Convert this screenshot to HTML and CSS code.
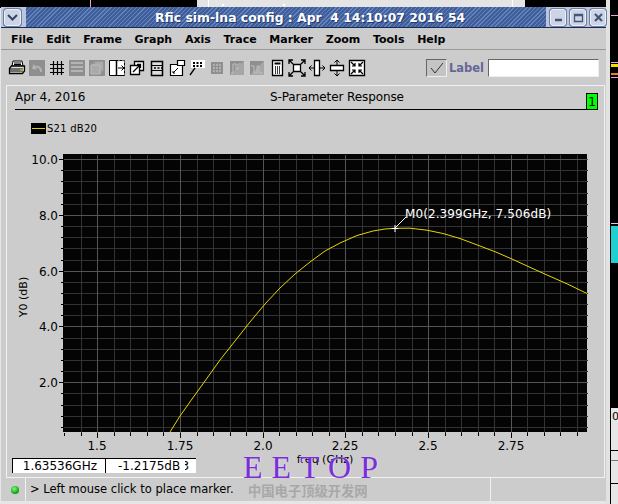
FILE: index.html
```
<!DOCTYPE html>
<html lang="en">
<head>
<meta charset="utf-8">
<title>Rfic sim-lna config</title>
<link rel="stylesheet" href="styles.css">
</head>
<body>
<div class="desk-top"><i class="dt a"></i><i class="dt b"></i><i class="dt c"></i><i class="dt d"></i><i class="dt e"></i><i class="dt f"></i></div>
<div class="desk-right">
  <i class="streak s1"></i><i class="streak s2"></i><i class="streak s3"></i><i class="streak s4"></i><i class="streak s5"></i>
  <i class="streak s6"></i><i class="cyan"></i>
  <div class="cell-block"><span class="cell-o">0</span></div>
</div>
<div class="window">
  <div class="titlebar">
    <button class="wbtn menu-btn"><svg width="11" height="7" viewBox="0 0 11 7"><path d="M1 1l4.500 4.500L10 1" fill="none" stroke="#334466" stroke-width="2"/></svg></button>
    <div class="title-stripes"><span class="title-text">Rfic sim-lna config : Apr&nbsp;&nbsp;4 14:10:07 2016 54</span></div>
    <div class="wbtns">
      <button class="wbtn small"><svg width="11" height="11" viewBox="0 0 11 11"><path d="M2 8h7" stroke="#445577" stroke-width="2.500"/></svg></button>
      <button class="wbtn small"><svg width="11" height="11" viewBox="0 0 11 11"><path d="M1.500 2.500h8v7h-8z M1.500 3.500h8" fill="none" stroke="#445577" stroke-width="1.300"/></svg></button>
      <button class="wbtn small"><svg width="11" height="11" viewBox="0 0 11 11"><path d="M2 2l7 7M9 2l-7 7" stroke="#445577" stroke-width="2.200"/></svg></button>
    </div>
  </div>
  <nav class="menubar">
    <span>File</span><span>Edit</span><span>Frame</span><span>Graph</span><span>Axis</span><span>Trace</span><span>Marker</span><span>Zoom</span><span>Tools</span><span>Help</span>
  </nav>
  <div class="toolbar">
    <div class="tools">
      <svg class="tool" viewBox="0 0 20 20"><path d="M6 3h9l1 5H5z" fill="#fff" stroke="#000"/><path d="M7 5h7M7 6.500h7" stroke="#000"/><path d="M2.500 10.500l2-2.500h13v5l-2 2.500h-13z" fill="#ddd" stroke="#000" stroke-width="1.300"/><path d="M3 11h13M3 13h13" stroke="#000"/><path d="M13 12h3" stroke="#dd0"/></svg>
      <svg class="tool" viewBox="0 0 20 20"><path d="M2 2h16v16H2z" fill="#8f8f8f"/><path d="M15 14c0-5-3-7-7-6L6.500 6 5 11l5 .500-1.500-2c3-.500 4.500 1 4.500 4.500z" fill="#b4b4b4"/></svg>
      <svg class="tool" viewBox="0 0 20 20"><path d="M6.500 3v14M10.500 3v14M14.500 3v14M3 6.500h14M3 10.500h14M3 14.500h14" stroke="#000" stroke-width="1.200"/></svg>
      <svg class="tool" viewBox="0 0 20 20"><path d="M2 2h16v16H2z" fill="#8f8f8f"/><path d="M4 5h12M4 9h12M4 13h12" stroke="#b4b4b4" stroke-width="2"/></svg>
      <svg class="tool" viewBox="0 0 20 20"><path d="M2 2h16v16H2z" fill="#8f8f8f"/><path d="M7 4h9v9M5 6h9v9H5z" fill="#b4b4b4" stroke="#a0a0a0"/><path d="M4 7h9v9H4z" fill="#aaa" stroke="#bbb"/></svg>
      <svg class="tool" viewBox="0 0 20 20"><path d="M2.500 2.500h15v15h-15z" fill="#fff" stroke="#000"/><path d="M9.500 2v16" stroke="#000" stroke-width="1.500"/><path d="M11 3h7M18 3v14" stroke="#ccc" stroke-dasharray="2 2"/><path d="M11 10h6M14.500 7.500L17 10l-2.500 2.500" fill="none" stroke="#000"/></svg>
      <svg class="tool" viewBox="0 0 20 20"><path d="M7.500 3.500h9v9h-9z" fill="#fff" stroke="#000" stroke-width="1.300"/><path d="M3.500 7.500h9v9h-9z" fill="#fff" stroke="#000" stroke-width="1.300"/><path d="M6 14l7-7M10 6.500h3.500V10" fill="none" stroke="#000" stroke-width="1.300"/></svg>
      <svg class="tool" viewBox="0 0 20 20"><path d="M4.500 3.500h11v14h-11z" fill="#ddd" stroke="#000" stroke-width="1.500"/><path d="M4 7.500h12M4 12.500h12" stroke="#000"/><path d="M7 10h2M10.500 10h2M14 10h2" stroke="#000" stroke-width="1.500"/></svg>
      <svg class="tool" viewBox="0 0 20 20"><path d="M3.500 6.500h12v11h-12z" fill="#fff" stroke="#000" stroke-width="1.200"/><path d="M10.500 2.500h7v5h-7z" fill="#fff" stroke="#000" stroke-width="1.200"/><path d="M6 15l5-5M8 15h-2v-2" fill="none" stroke="#000"/></svg>
      <svg class="tool" viewBox="0 0 20 20"><path d="M4 2h14v8H4z" fill="#fff"/><path d="M6 4h2v2H6zM9.500 4h2v2h-2zM13 4h2v2h-2zM6 7h2v2H6zM9.500 7h2v2h-2zM13 7h2v2h-2z" fill="#000"/><path d="M8 10l-5 7" stroke="#000" stroke-width="1.300"/></svg>
      <svg class="tool" viewBox="0 0 20 20"><path d="M4 4h12v12H4z" fill="#8f8f8f"/><path d="M6 6h2v2H6zM9 6h2v2H9zM12 6h2v2h-2zM6 9h2v2H6zM9 9h2v2H9zM12 9h2v2h-2zM6 12h2v2H6zM9 12h2v2H9zM12 12h2v2h-2z" fill="#b0b0b0"/></svg>
      <svg class="tool" viewBox="0 0 20 20"><path d="M3 3h14v14H3z" fill="#8f8f8f"/><path d="M3 17L17 3v14z" fill="#a6a6a6"/><path d="M4 15h2V6h3v5h2V6h3" fill="none" stroke="#c0c0c0"/></svg>
      <svg class="tool" viewBox="0 0 20 20"><path d="M3 3h14v14H3z" fill="#8f8f8f"/><path d="M3 17L17 3v14z" fill="#a6a6a6"/><path d="M4 8h3v7h3V8h2v7h4" fill="none" stroke="#c0c0c0"/></svg>
      <svg class="tool" viewBox="0 0 20 20"><path d="M5.500 2.500h10v15h-10z" fill="#fff" stroke="#000" stroke-width="1.300"/><path d="M7.500 4.500h6v2h-6z" fill="#000"/><path d="M8 9h1M10 9h1M12 9h1M8 11h1M10 11h1M12 11h1M8 13h1M10 13h1M12 13h1M8 15h1M10 15h1M12 15h1" stroke="#000" stroke-width="1.300"/></svg>
      <svg class="tool" viewBox="0 0 20 20"><path d="M6.500 6.500h7v7h-7z" fill="#fff" stroke="#000" stroke-width="1.300"/><path d="M6 6L2 2M14 6l4-4M6 14l-4 4M14 14l4 4M2 6V2h4M14 2h4v4M2 14v4h4M14 18h4v-4" fill="none" stroke="#000" stroke-width="1.300"/></svg>
      <svg class="tool" viewBox="0 0 20 20"><path d="M7.500 2.500h5v15h-5z" fill="#fff" stroke="#000" stroke-width="1.300"/><path d="M7 10H2M13 10h5M4.500 7.500L2 10l2.500 2.500M15.500 7.500L18 10l-2.500 2.500" fill="none" stroke="#000"/></svg>
      <svg class="tool" viewBox="0 0 20 20"><path d="M3.500 7.500h13v5h-13z" fill="#fff" stroke="#000" stroke-width="1.300"/><path d="M10 7V2M10 13v5M7.500 4.500L10 2l2.500 2.500M7.500 15.500L10 18l2.500-2.500" fill="none" stroke="#000"/></svg>
      <svg class="tool" viewBox="0 0 20 20"><path d="M2.500 2.500h15v15h-15z" fill="#fff" stroke="#000" stroke-width="1.300"/><path d="M4 4l4 4M8 5v3H5M16 4l-4 4M12 5v3h3M4 16l4-4M8 15v-3H5M16 16l-4-4M12 15v-3h3" fill="none" stroke="#000" stroke-width="1.200"/></svg>
    </div>
    <div class="label-box">
      <span class="check"><svg width="19" height="15" viewBox="0 0 19 15"><path d="M4 7l4 5 8-10" fill="none" stroke="#333"/></svg></span>
      <span class="label-text">Label</span>
      <span class="label-input"></span>
    </div>
  </div>
  <section class="panel">
    <header class="panel-head">
      <span class="date">Apr 4, 2016</span>
      <span class="chart-title">S-Parameter Response</span>
      <span class="badge">1</span>
    </header>
    <div class="legend"><span class="swatch"><i></i></span><span class="legend-name">S21 dB20</span></div>
    <svg class="chart" viewBox="7 137 597 339" width="597" height="339">
      <rect x="63" y="154" width="524" height="278" fill="#040404"/>
      <g transform="translate(.5 .5)" fill="none" shape-rendering="crispEdges">
        <path stroke="#333" d="M81 154v278M114 154v278M130 154v278M147 154v278M163 154v278M197 154v278M213 154v278M230 154v278M246 154v278M279 154v278M296 154v278M312 154v278M329 154v278M362 154v278M378 154v278M395 154v278M412 154v278M445 154v278M461 154v278M478 154v278M494 154v278M527 154v278M544 154v278M560 154v278M577 154v278"/>
        <path stroke="#333" d="M63 170h524M63 181h524M63 193h524M63 204h524M63 226h524M63 237h524M63 248h524M63 260h524M63 282h524M63 293h524M63 304h524M63 315h524M63 338h524M63 349h524M63 360h524M63 371h524M63 393h524M63 405h524M63 416h524M63 427h524"/>
        <path stroke="#555" d="M97 154v278M180 154v278M263 154v278M345 154v278M428 154v278M511 154v278M63 159h524M63 215h524M63 271h524M63 326h524M63 382h524"/>
        <path stroke="#000" d="M58 159h5M60 170h3M60 181h3M60 193h3M60 204h3M58 215h5M60 226h3M60 237h3M60 248h3M60 260h3M58 271h5M60 282h3M60 293h3M60 304h3M60 315h3M58 326h5M60 338h3M60 349h3M60 360h3M60 371h3M58 382h5M60 393h3M60 405h3M60 416h3M60 427h3"/>
        <path stroke="#000" d="M64 432v3M81 432v3M97 432v5M114 432v3M130 432v3M147 432v3M163 432v3M180 432v5M197 432v3M213 432v3M230 432v3M246 432v3M263 432v5M279 432v3M296 432v3M312 432v3M329 432v3M345 432v5M362 432v3M378 432v3M395 432v3M412 432v3M428 432v5M445 432v3M461 432v3M478 432v3M494 432v3M511 432v5M527 432v3M544 432v3M560 432v3M577 432v3"/>
      </g>
      <path class="curve" d="M170 432L180 416L192 399L205 381L220 360L235 341L250 322L265 304L280 288L295 274L310 262L325 251L340 243L357 235.500L373 231L385 229L395 228.300L410 228.200L427 230.200L443 233.500L460 238.500L480 246L497 252.500L513 259.500L530 267.300L547 275L567 283.800L587 293.500"/>
      <path class="marker" d="M395 228l11-11M391.500 228.500h7M395 225v7"/>
      <text class="m-label" x="405" y="218">M0(2.399GHz, 7.506dB)</text>
      <g class="y-ticks">
        <text x="58" y="164">10.0</text><text x="58" y="220">8.0</text><text x="58" y="276">6.0</text><text x="58" y="331">4.0</text><text x="58" y="387">2.0</text>
      </g>
      <g class="x-ticks">
        <text x="97" y="450">1.5</text><text x="180" y="450">1.75</text><text x="263" y="450">2.0</text><text x="345" y="450">2.25</text><text x="428" y="450">2.5</text><text x="511" y="450">2.75</text>
      </g>
      <text class="axis-y" transform="translate(27 297) rotate(-90)">Y0 (dB)</text>
      <text class="axis-x" x="325" y="463">freq (GHz)</text>
    </svg>
    <div class="readout"><span class="read-f">1.63536GHz</span><span class="read-d">-1.2175dB<span class="read-x">3</span></span></div>
  </section>
  <footer class="status">
    <span class="led"></span>
    <span class="msg">&gt; Left mouse click to place marker.</span>
    <span class="status-end"></span>
  </footer>
</div>
<div class="wm-en">EETOP</div>
<div class="wm-cn">中国电子顶级开发网</div>
</body>
</html>
```
FILE: styles.css
```
html, body { margin: 0; padding: 0; height: 100%; }
body { position: relative; width: 618px; height: 504px; overflow: hidden; background: #e6e6e6; font-family: "DejaVu Sans", sans-serif; }

.desk-top { position: absolute; left: 0; top: 0; width: 618px; height: 8px; background: #000; }
.dt { position: absolute; top: 0; height: 8px; }
.dt.a { left: 90px; width: 1px; background: #f0a0e0; }
.dt.b { left: 197px; width: 315px; background: #e4e4e4; border-left: 11px solid #e4e4e4; box-sizing: border-box; }
.dt.c { left: 512px; width: 13px; background: #e4e4e4; border-left: 1px solid #fff; box-sizing: border-box; }
.dt.d { left: 208px; width: 1px; background: #fff; }
.dt.e { left: 222px; top: 4px; width: 2px; height: 2px; background: #fff; }
.dt.f { left: 283px; top: 4px; width: 2px; height: 2px; background: #fff; }

.desk-right { position: absolute; left: 606px; top: 0; width: 12px; height: 504px; background: #e2e2e2; }
.desk-right::before { content: ""; position: absolute; left: 4px; top: 0; width: 8px; height: 408px; background: #000; }
.streak { position: absolute; left: 5px; width: 7px; height: 1px; }
.s1 { top: 15px; background: #f0a0e0; }
.s2 { top: 62px; background: #f0a0e0; }
.s3 { top: 64px; height: 3px; background: #f0e000; }
.s4 { top: 73px; height: 2px; background: #e88020; }
.s5 { top: 77px; background: #f0a0e0; }
.s6 { top: 223px; background: #f0c0e8; }
.cyan { position: absolute; left: 5px; top: 226px; width: 7px; height: 37px; background-color: #20d0d0; background-image: radial-gradient(#003838 45%, transparent 50%); background-size: 2px 2px; }
.cell-block { position: absolute; left: 4px; top: 408px; width: 8px; height: 96px; box-sizing: border-box; border-left: 1px solid #000; background: linear-gradient(#000,#000) 0 42px/8px 1px no-repeat, linear-gradient(#777,#777) 0 52px/8px 1px no-repeat, linear-gradient(#000,#000) 0 75px/8px 1px no-repeat, #e6e6e6; }
.cell-o { display: block; font-size: 11px; line-height: 18px; padding-left: 1px; color: #000; }

.window { position: absolute; left: 1px; top: 7px; width: 605px; height: 494px; display: flex; flex-direction: column; background: #cccccc; }
.titlebar { height: 21px; display: flex; align-items: center; padding: 0 0 0 3px; background: #b9c6de; border-radius: 5px 5px 0 0; box-sizing: border-box; border-bottom: 1px solid #1a2a50; }
.wbtn { width: 17px; height: 17px; padding: 0; margin: 0; display: flex; align-items: center; justify-content: center; background: #ccd4e6; border: 1px solid #ecf0f8; border-radius: 3px; box-shadow: 0 0 0 1px #6c7ea4; flex: none; }
.wbtn.small { width: 16px; }
.menu-btn { margin-right: 5px; }
.title-stripes { flex: 1; height: 20px; display: flex; align-items: center; justify-content: flex-start; background-color: #4f6ea8; background-image: repeating-linear-gradient(135deg, #6482bc 0 1px, #3f5e9a 1px 3px); padding-left: 129px; box-sizing: border-box; }
.title-text { color: #fff; font-weight: bold; font-size: 12.400px; text-shadow: 1px 1px 0 #24386a; white-space: pre; }
.wbtns { display: flex; gap: 4px; padding: 0 0 0 4px; }

.menubar { height: 20px; display: flex; align-items: center; gap: 12.700px; padding-left: 10px; padding-top: 1px; box-sizing: content-box; font-size: 11px; font-weight: bold; color: #000; border-bottom: 1px solid #999; margin-bottom: -1px; }

.toolbar { height: 36px; display: flex; align-items: center; position: relative; box-sizing: border-box; padding-top: 2px; }
.tools { display: flex; padding-left: 6px; }
.tool { width: 20px; height: 20px; display: block; }
.label-box { position: absolute; left: 425px; top: 10px; height: 18px; display: flex; align-items: stretch; }
.check { width: 21px; height: 18px; box-sizing: border-box; border: 1px solid; border-color: #666 #eee #eee #666; display: flex; align-items: center; justify-content: center; background: #c4c4c4; }
.label-text { width: 41px; padding-left: 2px; box-sizing: border-box; font-size: 11.500px; line-height: 18px; font-weight: bold; color: #666699; }
.label-input { width: 111px; height: 18px; box-sizing: border-box; background: #fff; border: 1px solid; border-color: #666 #eee #eee #666; }

.panel { margin-left: 5px; width: 599px; height: 393px; box-sizing: border-box; border: 1px solid #f2f2f2; position: relative; flex: none; }
.panel-head { height: 23px; margin: 0 6px 0 8px; position: relative; border-bottom: 1px solid #000; font-size: 12px; color: #000; }
.date { position: absolute; left: 0; top: 4px; }
.chart-title { position: absolute; left: 255px; top: 4px; white-space: nowrap; letter-spacing: -.1px; }
.badge { position: absolute; right: 0; top: 7px; width: 12px; height: 16px; box-sizing: border-box; background: #00ff00; border: 1px solid #000; border-bottom: 0; font-size: 12px; line-height: 16px; text-align: center; }
.legend { height: 18px; padding-top: 9px; display: flex; align-items: center; padding-left: 24px; font-size: 10px; color: #000; letter-spacing: .25px; }
.legend-name { margin-left: 1px; }
.swatch { width: 15px; height: 11px; background: #000; display: flex; align-items: center; }
.swatch i { display: block; width: 13px; height: 1px; margin-left: 1px; background: #e0d000; }
.chart { display: block; }
.curve { fill: none; stroke: #e6d800; stroke-width: 1; }
.marker { fill: none; stroke: #fff; stroke-width: 1; }
.m-label { fill: #fff; font-size: 12px; letter-spacing: .1px; }
.y-ticks text { font-size: 12px; text-anchor: end; fill: #000; }
.x-ticks text { font-size: 12px; text-anchor: middle; fill: #000; }
.axis-y { font-size: 11px; text-anchor: middle; fill: #000; }
.axis-x { font-size: 11px; text-anchor: middle; fill: #000; }

.readout { position: absolute; left: 5px; top: 372px; height: 15px; display: flex; font-size: 12px; color: #000; }
.read-f { width: 93px; box-sizing: border-box; background: #fff; border-left: 1px solid #000; border-top: 1px solid #000; text-align: right; padding-right: 8px; line-height: 15px; }
.read-d { width: 91px; box-sizing: border-box; background: #fff; border-left: 1px solid #000; border-top: 1px solid #000; padding-left: 12px; line-height: 15px; white-space: nowrap; overflow: hidden; }
.read-x { display: inline-block; width: 4px; margin-left: 5px; overflow: hidden; direction: rtl; vertical-align: top; }

.status { height: 23px; flex: none; display: flex; align-items: center; margin-left: 4px; position: relative; }
.led { width: 8px; height: 8px; margin-left: 6px; border-radius: 50%; background: radial-gradient(circle at 40% 35%, #7cff7c, #0a9a0a 70%, #035003); flex: none; }
.msg { margin-left: 6px; padding-left: 4px; height: 23px; line-height: 22px; border-left: 1px solid #f0f0f0; font-size: 11.500px; width: 465px; flex: none; box-sizing: border-box; }
.status-end { height: 23px; border-left: 1px solid #f0f0f0; flex: 1; }

.wm-en { position: absolute; left: 243px; top: 449px; font-family: "Liberation Serif", serif; font-size: 32px; line-height: 36px; letter-spacing: 9px; color: #7a2fd6; white-space: nowrap; text-shadow: 1px 0 0 #e4d8ff; }
.wm-cn { position: absolute; left: 248px; top: 483px; font-family: "Noto Sans CJK SC", sans-serif; font-weight: bold; font-size: 13.300px; line-height: 16px; color: #a8a8a8; white-space: nowrap; }
```
